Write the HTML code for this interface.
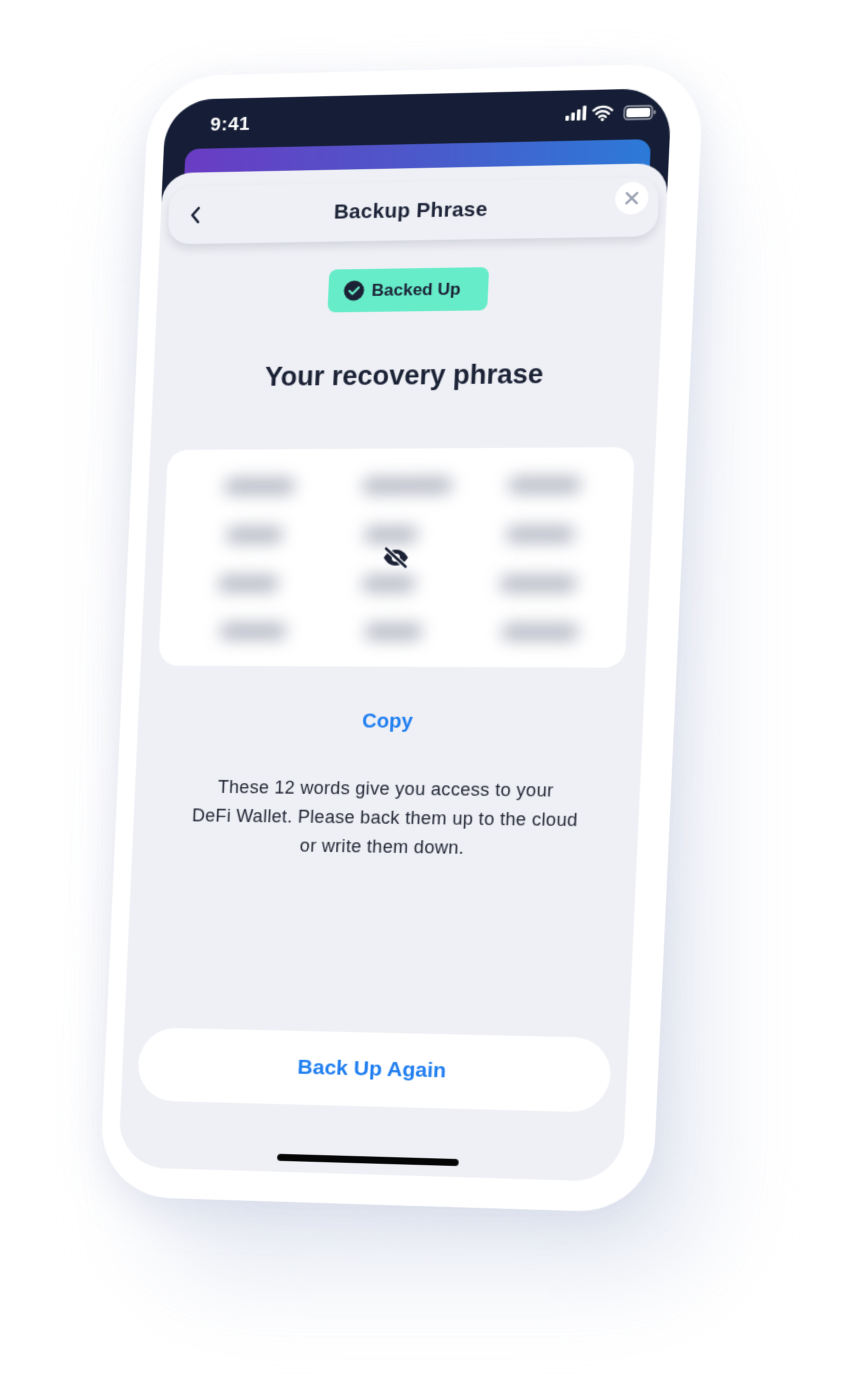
<!DOCTYPE html>
<html><head><meta charset="utf-8"><style>
html,body{margin:0;padding:0;background:#fff;width:844px;height:1378px;overflow:hidden}
*{box-sizing:border-box}
#bgsh{position:absolute;left:150px;top:140px;width:560px;height:1140px;border-radius:90px;background:#e3e7f1;filter:blur(45px);opacity:.8}
#w{position:absolute;left:0;top:0;width:500px;height:1080px;transform-origin:0 0;
transform:matrix3d(0.97880,-0.02834,0,-0.0000494,-0.04428,0.98960,0,0.000001406,0,0,1,0,166,100,0,1);
font-family:"Liberation Sans",sans-serif}
.frame{position:absolute;left:-18px;top:-24px;width:548px;height:1134px;border-radius:72px;background:#fff;box-shadow:0 10px 40px rgba(180,190,215,.35)}
.screen{position:absolute;left:0;top:0;width:500px;height:1080px;border-radius:48px;overflow:hidden;background:#eff0f5}
.status{position:absolute;left:0;top:0;width:500px;height:140px;background:#151e36}
.time{position:absolute;left:46px;top:16px;color:#fff;font-size:19px;font-weight:bold;letter-spacing:.5px}
.grad{position:absolute;left:22px;top:50px;width:460px;height:60px;border-radius:14px;background:linear-gradient(90deg,#6a3cc4,#4f55c8 45%,#2c7ad8)}
.sheet{position:absolute;left:0;top:74px;width:500px;height:1010px;border-radius:30px 30px 0 0;background:#eff0f5}
.hdr{position:absolute;left:8px;top:14px;width:484px;height:58px;border-radius:22px;background:#eff0f6;box-shadow:0 5px 10px rgba(30,40,70,.13)}
.hdr .t{position:absolute;left:0;right:0;top:17px;text-align:center;font-size:20.5px;font-weight:bold;color:#1b2236;letter-spacing:.3px}
.cls{position:absolute;right:10px;top:4px;width:32px;height:32px;border-radius:50%;background:#fff}
.badge{position:absolute;left:172px;top:100px;width:158px;height:43px;border-radius:8px;background:#66ecc8;font-size:17px;font-weight:bold;color:#1b2236}
.h1{position:absolute;left:0;right:0;top:192px;text-align:center;font-size:27px;font-weight:bold;color:#1b2236}
.card{position:absolute;left:18px;top:280px;width:462px;height:218px;border-radius:20px;background:#fff}
.blob{position:absolute;height:18px;border-radius:9px;background:#8d93a5;filter:blur(8px);opacity:.6}
.copy{position:absolute;left:0;right:0;top:542px;text-align:center;font-size:20px;font-weight:bold;color:#1f7ef0}
.p{position:absolute;left:0;right:0;top:606px;text-align:center;font-size:18px;line-height:29px;color:#1f2433;letter-spacing:.3px}
.btn{position:absolute;left:16px;top:864px;width:468px;height:74px;border-radius:38px;background:#fff;text-align:center;line-height:74px;font-size:21px;font-weight:bold;color:#1f7ef0}
.home{position:absolute;left:160px;top:1062px;width:180px;height:7px;border-radius:4px;background:#050505}
</style></head><body>
<div id="bgsh"></div>
<div id="w">
<div class="frame"></div>
<div class="screen">
 <div class="status">
  <div class="time">9:41</div>
  <svg style="position:absolute;left:398px;top:14px" width="92" height="20" viewBox="0 0 92 20">
   <rect x="0" y="11" width="3.5" height="5" rx="1" fill="#fff"/><rect x="5.5" y="8" width="3.5" height="8" rx="1" fill="#fff"/><rect x="11" y="5" width="3.5" height="11" rx="1" fill="#fff"/><rect x="16.5" y="1.5" width="3.5" height="14.5" rx="1" fill="#fff"/>
   <path d="M27 6.5a13 13 0 0 1 18 0M30 9.8a8.5 8.5 0 0 1 12 0M33 13a4 4 0 0 1 6 0" stroke="#fff" stroke-width="2.4" fill="none" stroke-linecap="round"/><circle cx="36" cy="15.6" r="1.6" fill="#fff"/>
   <rect x="57" y="3" width="27" height="13" rx="3.5" fill="none" stroke="#fff" stroke-width="1.4" opacity=".6"/><rect x="59" y="5" width="23" height="9" rx="2" fill="#fff"/><rect x="85.5" y="7.5" width="1.8" height="4" rx="1" fill="#fff" opacity=".6"/>
  </svg>
  <div class="grad"></div>
 </div>
 <div class="sheet">
  <div class="hdr">
   <svg style="position:absolute;left:21px;top:20px" width="12" height="18" viewBox="0 0 12 18"><path d="M9 2L3 9l6 7" stroke="#1b2236" stroke-width="2.6" fill="none" stroke-linecap="round" stroke-linejoin="round"/></svg>
   <div class="t">Backup Phrase</div>
   <div class="cls"><svg width="32" height="32" viewBox="0 0 32 32"><path d="M11 11l10 10M21 11L11 21" stroke="#9aa0b0" stroke-width="2.4" stroke-linecap="round"/></svg></div>
  </div>
  <div class="badge">
   <svg style="position:absolute;left:15px;top:11px" width="21" height="21" viewBox="0 0 21 21"><circle cx="10.5" cy="10.5" r="10" fill="#1b2236"/><path d="M6 10.8l3 3 6-6.3" stroke="#66ecc8" stroke-width="2.2" fill="none" stroke-linecap="round" stroke-linejoin="round"/></svg>
   <span style="position:absolute;left:43px;top:12px">Backed Up</span>
  </div>
  <div class="h1">Your recovery phrase</div>
  <div class="card">
   <div class="blob" style="left:58px;top:28px;width:72px"></div><div class="blob" style="left:196px;top:28px;width:90px"></div><div class="blob" style="left:340px;top:28px;width:72px"></div>
   <div class="blob" style="left:62px;top:77px;width:58px"></div><div class="blob" style="left:200px;top:77px;width:54px"></div><div class="blob" style="left:340px;top:77px;width:68px"></div>
   <div class="blob" style="left:56px;top:126px;width:62px"></div><div class="blob" style="left:200px;top:126px;width:54px"></div><div class="blob" style="left:336px;top:126px;width:76px"></div>
   <div class="blob" style="left:60px;top:174px;width:68px"></div><div class="blob" style="left:205px;top:174px;width:58px"></div><div class="blob" style="left:340px;top:174px;width:76px"></div>
   <svg style="position:absolute;left:218px;top:96px" width="30" height="26" viewBox="0 0 30 26"><path d="M3 13c3-5 7-8 12-8s9 3 12 8c-3 5-7 8-12 8S6 18 3 13z" fill="#1b2236"/><circle cx="15" cy="13" r="4" fill="#fff"/><path d="M5 4l20 18" stroke="#fff" stroke-width="5"/><path d="M5 4l20 18" stroke="#1b2236" stroke-width="2.6" stroke-linecap="round"/></svg>
  </div>
  <div class="copy">Copy</div>
  <div class="p">These 12 words give you access to your<br>DeFi Wallet. Please back them up to the cloud<br>or write them down.</div>
  <div class="btn">Back Up Again</div>
 </div>
 <div class="home"></div>
</div>
</div>
</body></html>
